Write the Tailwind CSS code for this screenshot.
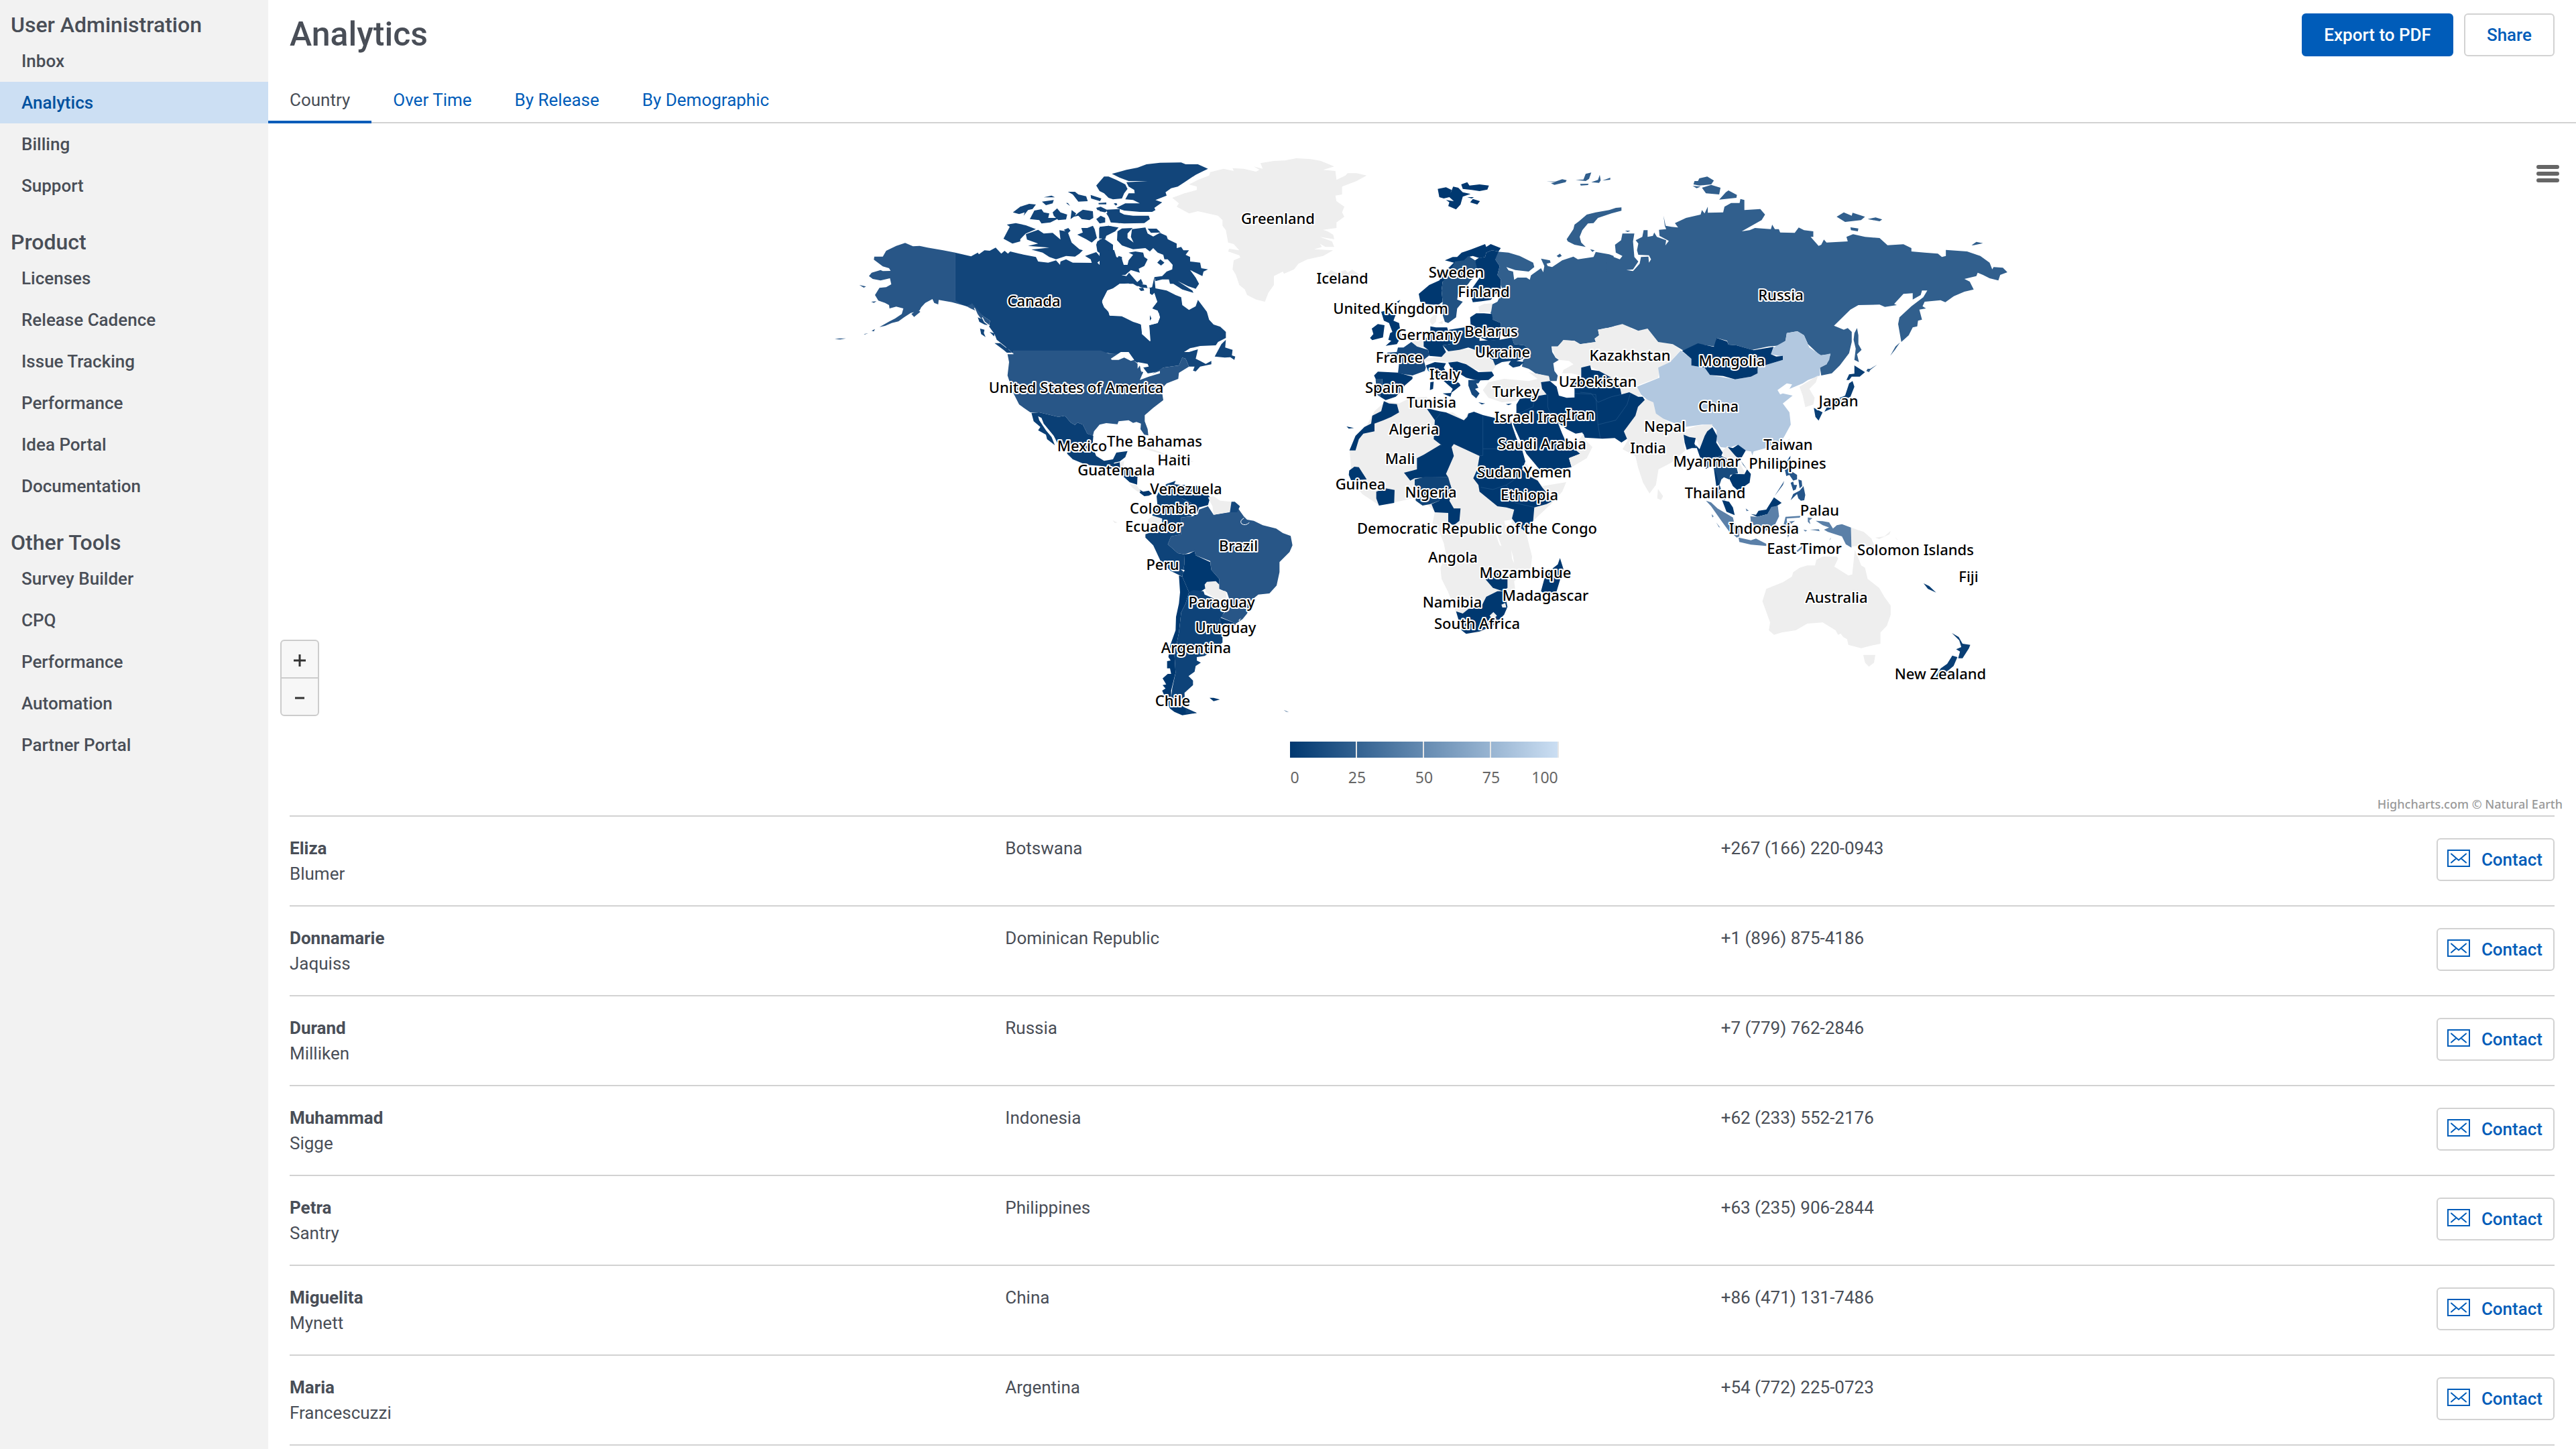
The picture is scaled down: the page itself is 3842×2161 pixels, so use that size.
<!DOCTYPE html>
<html lang="en">
<head>
  <meta charset="UTF-8" />
  <meta name="viewport" content="width=device-width, initial-scale=1.0" />
  <title>Analytics</title>
  <script src="https://cdn.jsdelivr.net/npm/@tailwindcss/browser@4"></script>
</head>
<body class="bg-white text-[#494e57] font-[Roboto,sans-serif] text-[26px] leading-[38px] min-h-screen">
  <div class="flex min-h-screen">
    <nav class="w-[400px] shrink-0 bg-[#f2f2f2] font-medium flex flex-col gap-4">
      <section>
        <h2 class="text-[32px] leading-[42px] px-4 pt-4 pb-[2px]">User Administration</h2>
        <a href="#" class="block px-8 py-3">Inbox</a>
        <a href="#" class="block px-8 py-3 bg-[#ccdff3] text-[#00519f]">Analytics</a>
        <a href="#" class="block px-8 py-3">Billing</a>
        <a href="#" class="block px-8 py-3">Support</a>
      </section>
      <section>
        <h2 class="text-[32px] leading-[42px] px-4 pt-4 pb-[2px]">Product</h2>
        <a href="#" class="block px-8 py-3">Licenses</a>
        <a href="#" class="block px-8 py-3">Release Cadence</a>
        <a href="#" class="block px-8 py-3">Issue Tracking</a>
        <a href="#" class="block px-8 py-3">Performance</a>
        <a href="#" class="block px-8 py-3">Idea Portal</a>
        <a href="#" class="block px-8 py-3">Documentation</a>
      </section>
      <section>
        <h2 class="text-[32px] leading-[42px] px-4 pt-4 pb-[2px]">Other Tools</h2>
        <a href="#" class="block px-8 py-3">Survey Builder</a>
        <a href="#" class="block px-8 py-3">CPQ</a>
        <a href="#" class="block px-8 py-3">Performance</a>
        <a href="#" class="block px-8 py-3">Automation</a>
        <a href="#" class="block px-8 py-3">Partner Portal</a>
      </section>
    </nav>

    <main class="flex-1 min-w-0">
      <header class="flex items-start justify-between pl-8 pr-8 pt-5 h-[114px]">
        <h1 class="text-[50px] leading-[62px] font-medium">Analytics</h1>
        <div class="flex gap-4 font-medium">
          <button class="h-16 px-[31px] rounded-md border-2 border-[#005cb9] bg-[#005cb9] text-white">Export to PDF</button>
          <button class="h-16 px-8 rounded-md border-2 border-[#d2d2d2] text-[#005cb9]">Share</button>
        </div>
      </header>

      <div role="tablist" class="flex h-[70px] shadow-[inset_0_-2px_0_#d2d2d2] text-[#005cb9]">
        <button role="tab" aria-selected="true" class="px-8 pt-1 border-b-4 border-[#005cb9] text-[#494e57]">Country</button>
        <button role="tab" class="px-8 pt-1 border-b-4 border-transparent">Over Time</button>
        <button role="tab" class="px-8 pt-1 border-b-4 border-transparent">By Release</button>
        <button role="tab" class="px-8 pt-1 border-b-4 border-transparent">By Demographic</button>
      </div>

      <section class="relative flex justify-center">
        <svg id="map" class="w-full max-w-[1800px]" viewBox="1221 184 1800 1032" role="img" aria-label="World map">
          <!-- Northern Canada, Alaska -->
          <g transform="translate(1220 210) scale(.33333)">
            <path class="fill-[#285687]" d="M390,457 425,472 455,470 490,478 560,490 614,500 614,714 640,718 690,728 710,740 740,785 770,805 765,825 735,800 715,780 700,760 665,740 600,722 540,712 538,732 520,725 512,708 480,725 462,745 455,758 435,765 415,770 385,790 360,808 330,815 300,828 275,833 320,808 345,795 375,775 382,750 350,742 320,750 318,735 300,725 270,715 255,690 275,658 305,655 328,642 322,615 280,625 245,618 228,605 240,590 280,578 290,583 325,582 318,570 290,562 250,532 252,518 290,518 305,492 350,470ZM418,775 445,755 458,765 430,788ZM185,645 215,652 205,657ZM238,720 262,718 250,725ZM75,887 95,884 125,884 100,889ZM205,865 225,861 210,866ZM240,850 255,842 250,853Z"/>
            <path class="fill-[#12457a]" d="M613,500 685,517 715,500 720,508 745,490 770,492 725,515 795,478 820,505 835,492 850,505 860,495 900,505 975,520 985,540 1030,545 1065,535 1083,555 1085,540 1110,530 1140,545 1225,546 1220,530 1195,515 1245,498 1260,515 1280,520 1250,545 1260,555 1285,520 1250,495 1245,465 1250,450 1275,435 1320,465 1320,500 1335,535 1345,515 1360,520 1360,620 1330,650 1300,660 1272,705 1270,735 1290,748 1303,782 1360,782 1360,960 1340,955 1300,948 1265,940 875,940 875,953 850,930 800,890 790,865 765,830 770,805 740,785 690,728 665,740 640,730 613,714Z"/>
            <path class="fill-[#12457a]" d="M845,375 885,368 930,378 975,395 930,415 905,440 905,450 870,460 830,438 858,385ZM930,418 985,398 1010,415 1050,412 1085,442 1080,400 1110,405 1120,415 1135,455 1170,485 1185,490 1170,505 1150,518 1110,515 1065,530 1035,520 1005,500 955,487 1035,478 940,470 985,460 935,442ZM872,320 905,295 945,282 975,285 960,305 940,310 920,335 925,320 900,328ZM948,350 968,312 1000,306 1010,320 1035,325 1030,345 1080,345 1040,365 1000,370 990,355ZM1050,320 1070,302 1085,320 1115,330 1110,352 1075,355 1055,335ZM1130,350 1135,310 1155,325 1150,335 1165,322 1185,308 1230,315 1232,345 1215,355 1180,350 1165,335 1145,340ZM1010,253 1045,245 1060,253ZM1002,272 1055,265 1050,280 1020,288ZM1118,228 1150,228 1165,240 1200,248 1207,270 1165,272 1140,240ZM1110,278 1118,278 1128,292ZM1220,242 1268,258 1262,270 1222,258ZM1160,420 1185,410 1178,390 1205,390 1230,380 1238,395 1248,435 1225,455 1200,440ZM1245,350 1265,335 1285,345 1285,365 1260,370ZM1258,390 1300,380 1345,388 1330,405 1290,425 1285,440 1258,435ZM1100,398 1120,390 1130,402 1118,414ZM1245,300 1265,295 1292,308 1290,318 1250,310ZM1255,278 1290,276 1290,284 1256,284ZM1290,308 1350,305 1350,368 1320,360 1300,340ZM1325,280 1340,282 1332,290Z"/>
            <path class="fill-[#12457a]" d="M725,840 745,845 742,860 750,878 730,865ZM790,905 815,905 860,940 868,948 845,948 830,935ZM835,910 855,935 850,938ZM715,790 740,800 760,825 745,822 722,810ZM768,855 790,862 788,875Z"/>
            <path class="fill-none stroke-white stroke-[4px]" d="M680,752 700,760 712,775 722,790M700,748 712,775 705,800M735,790 745,810 768,828"/>
          </g>
          <!-- Eastern Canada, Greenland, Iceland -->
          <g transform="translate(1640 210) scale(.33333)">
            <path class="fill-[#12457a]" d="M40,380 60,385 70,395 45,412 20,420 0,440 35,455 40,490 65,488 75,520 100,530 108,555 125,555 130,535 150,510 130,500 160,495 195,500 200,520 215,530 200,560 175,572 180,590 140,578 115,600 95,600 120,605 132,590 140,600 175,640 210,645 215,660 235,655 245,610 250,660 300,670 340,690 365,700 370,735 400,757 430,740 440,712 480,765 490,800 510,822 540,832 565,855 565,882 530,900 520,915 450,918 405,928 378,945 400,945 440,933 435,955 430,975 450,985 475,998 500,985 500,1000 450,1010 430,1032 418,1028 425,1010 400,1010 385,975 370,970 355,1005 285,1015 260,1032 215,1042 190,1060 185,1040 200,1020 180,1000 155,985 75,955 0,945 0,782 45,782 100,785 150,810 188,822 190,865 225,897 222,825 260,815 270,790 260,760 235,750 258,720 245,680 235,690 205,670 175,650 145,650 130,638 90,640 60,660 35,670 20,700 10,720 20,745 40,765 45,782 0,782 0,385Z"/>
            <path class="fill-white" d="M12,715 35,670 60,662 90,640 150,640 175,655 225,660 225,690 245,690 258,720 235,750 265,770 270,790 260,815 222,825 228,897 190,865 185,822 130,795 100,785 45,782 40,765 20,745Z"/>
            <path class="fill-[#12457a]" d="M-15,200 20,160 40,160 75,175 105,190 115,195 125,215 110,235 100,258 60,262 40,255 20,235 0,225ZM55,148 120,130 170,120 210,105 270,98 365,97 385,105 440,105 485,125 430,152 380,185 350,205 320,212 295,230 300,245 250,265 280,275 245,300 250,310 235,318 180,318 110,312 75,300 115,280 180,280 150,265 115,262 130,235 157,235 155,220 130,205 120,185 215,180 130,180 90,165ZM30,325 70,310 110,330 150,335 220,335 225,350 200,368 110,370 50,365 40,340ZM0,300 30,312 25,320 0,315ZM62,282 75,278 78,288ZM78,445 80,405 100,392 148,390 125,415 125,435 152,455 140,430 145,395 205,388 215,415 240,428 270,412 300,425 305,440 345,460 345,480 365,475 375,490 400,490 385,510 405,520 405,540 450,545 455,570 485,575 465,585 460,605 405,578 430,612 445,640 430,662 395,650 350,628 415,670 420,680 370,665 330,640 315,640 310,620 280,620 250,628 245,610 280,605 300,585 325,575 327,555 305,530 290,530 285,510 260,500 240,480 225,495 205,480 150,485 100,468ZM215,393 255,393 273,410 230,412ZM165,635 185,618 195,640 175,645ZM258,545 272,530 290,545 275,558ZM175,660 195,657 200,670 185,672ZM225,780 232,795 225,805ZM515,965 545,910 565,890 562,925 595,935 592,960 607,965 603,980 585,968 560,970Z"/>
            <path class="fill-[#eee]" d="M325,255 380,235 435,220 435,205 400,195 440,175 490,155 495,140 555,125 600,135 595,122 645,125 700,138 715,130 690,115 730,125 720,100 780,90 830,88 880,78 945,82 990,90 1050,115 1000,130 1055,135 1060,175 1100,155 1110,145 1150,145 1195,155 1150,180 1085,205 1085,240 1055,245 1060,270 1095,295 1085,320 1095,340 1060,365 1060,390 1000,398 1020,405 1045,420 1050,440 985,430 1040,450 1050,475 1010,475 985,460 995,475 960,485 1045,490 1000,515 930,530 890,550 870,575 825,595 820,585 780,605 780,645 755,680 740,720 700,710 660,690 650,665 625,645 610,600 595,575 600,535 630,522 625,512 575,495 580,483 625,490 600,462 575,455 565,400 550,380 550,355 530,335 440,315 400,325 345,295 355,280ZM1010,600 1035,578 1060,590 1100,578 1110,590 1130,576 1165,600 1120,625 1050,620Z"/>
          </g>
          <!-- United States and Latin America -->
          <g transform="translate(1500 600) scale(.33333)">
            <path class="fill-[#285687]" d="M33,-232 425,-232 460,-218 500,-218 520,-225 575,-185 605,-160 610,-120 650,-125 705,-155 775,-165 790,-200 805,-195 820,-160 775,-132 772,-105 720,-85 697,-60 705,-10 660,25 622,58 622,85 635,120 638,148 620,145 603,120 605,95 585,88 570,92 550,80 505,85 500,98 450,93 420,100 395,130 390,150 365,140 345,100 320,90 310,102 290,90 265,60 235,65 150,45 110,45 60,10 35,-40 8,-120 15,-180 8,-215 35,-215Z"/>
            <path class="fill-white" d="M470,-195 515,-225 550,-225 575,-190 560,-185 530,-200 505,-190 475,-190ZM590,-180 635,-172 640,-160 615,-155 635,-130 660,-130 690,-140 690,-130 640,-115 600,-100 615,-135 605,-140 600,-165 590,-150Z"/>
            <path class="fill-[#0a3f75]" d="M115,47 150,45 235,65 265,60 290,90 310,102 320,90 345,100 365,140 392,150 388,200 405,240 440,262 480,255 495,225 545,218 535,245 510,265 485,270 480,295 430,285 360,280 300,255 275,230 275,205 235,190 215,150 170,95 160,70 145,62 150,80 180,125 205,155 220,192 185,165 180,145 145,125 155,110 125,85Z"/>
            <path class="fill-[#003870]" d="M482,275 512,268 512,290 560,300 590,320 588,368 555,358 530,335 480,300ZM598,390 615,400 640,395 655,410 640,418 620,420 600,405ZM735,240 745,242 740,248Z"/>
            <path class="fill-[#eee]" d="M510,268 530,262 525,295 512,290ZM555,366 585,370 605,400 590,400 565,380ZM580,205 620,198 700,225 712,235 660,220 610,205ZM700,245 790,252 755,262 710,255ZM478,528 500,538 488,540ZM660,140 680,150 676,160ZM820,262 842,263 832,267Z"/>
            <path class="fill-[#285687]" d="M785,515 835,510 860,500 865,480 905,465 930,503 1000,492 1040,475 1065,510 1080,525 1110,530 1150,550 1210,565 1240,585 1275,598 1283,640 1270,670 1225,715 1225,760 1212,820 1180,855 1130,860 1100,885 1080,945 1060,970 1030,990 960,960 1000,920 1000,880 990,850 955,835 955,790 920,750 915,710 850,685 845,665 800,680 770,675 725,635 740,600 785,590Z"/>
            <path class="fill-[#0e4379]" d="M675,420 690,390 720,365 760,352 740,400 790,430 830,450 840,480 830,510 785,515 785,590 740,600 725,635 770,675 798,680 800,720 790,780 740,755 695,715 660,640 625,605 625,590 670,575 700,540 655,505 680,470Z"/>
            <path class="fill-[#003870]" d="M720,375 760,350 745,365 770,368 800,370 870,375 885,390 915,425 905,460 865,470 850,510 835,500 830,450 790,430 740,410Z"/>
            <path class="fill-[#eee]" d="M905,425 930,420 960,440 1010,445 1005,490 930,503 925,465ZM635,525 660,508 700,520 700,545 650,585 630,580 640,550Z"/>
            <path class="fill-[#15487d]" d="M1010,445 1025,445 1048,465 1035,492 1003,492Z"/>
            <path class="fill-none stroke-white stroke-[3px]" d="M1066,518Q1045,530 1055,543Q1072,555 1090,538"/>
            <path class="fill-[#003870]" d="M798,680 820,678 845,665 850,685 915,715 920,750 955,790 955,835 890,835 860,855 820,850 790,780 800,720Z"/>
            <path class="fill-[#003870]" d="M775,775 790,780 820,850 805,900 785,940 775,1030 755,1130 760,1210 740,1290 740,1320 800,1365 855,1390 790,1400 755,1385 735,1370 700,1290 715,1280 702,1265 718,1262 702,1235 725,1215 740,1215 735,1190 722,1190 722,1158 738,1155 728,1140 735,1090 760,1020 762,960 775,900 780,850Z"/>
            <path class="fill-[#0e4379]" d="M820,850 840,840 885,845 890,860 985,900 985,930 960,965 955,1010 970,1045 970,1075 935,1105 890,1135 855,1140 855,1155 873,1165 850,1180 845,1205 818,1225 838,1245 838,1265 800,1300 802,1365 740,1320 745,1280 760,1210 755,1130 775,1030 785,940 805,900ZM805,1368 855,1390 805,1392Z"/>
            <path class="fill-[#eee]" d="M890,815 900,803 940,800 955,815 955,840 985,845 990,885 950,885 895,850Z"/>
            <path class="fill-[#003870]" d="M960,963 1030,990 1020,1010 955,1005ZM912,1322 930,1322 958,1330 930,1337ZM1243,1376 1267,1387 1255,1384Z"/>
            <path class="fill-white" d="M782,748 800,750 798,758ZM1052,965 1045,980 1042,975Z"/>
          </g>
          <!-- Europe and the Middle East -->
          <g transform="translate(1960 220) scale(.33333)">
            <path class="fill-[#315f8d]" d="M810,465 870,470 920,485 980,515 985,535 960,555 900,548 860,535 870,550 890,555 895,592 910,582 950,582 965,592 970,572 1015,540 1025,558 1030,530 1015,497 1055,505 1058,515 1040,520 1045,530 1065,535 1110,505 1160,488 1180,500 1250,490 1260,467 1320,478 1340,485 1340,800 1270,815 1275,840 1255,855 1260,870 1190,880 1165,865 1115,862 1090,890 1062,890 1065,915 1080,940 1095,950 1070,965 1075,1000 1090,1020 1085,1045 1055,1045 1050,1025 990,1010 960,990 930,980 935,950 960,930 960,900 940,885 895,880 885,850 835,820 835,785 800,770 790,740 790,705 820,690 845,640 835,615 835,590 820,570 830,530 810,500ZM1130,410 1160,365 1165,345 1185,330 1220,300 1260,290 1320,280 1350,270 1375,268 1375,283 1330,295 1270,315 1250,338 1225,340 1200,370 1188,400 1195,425 1215,445 1165,435 1135,420ZM1085,485 1100,475 1108,485 1095,492ZM1235,455 1255,460 1245,467ZM1040,152 1080,152 1110,142 1130,146 1125,155 1075,167 1060,160 1080,155ZM1170,145 1205,143 1215,118 1240,112 1230,140 1215,150ZM1240,155 1270,145 1278,122 1282,147 1275,158ZM1290,148 1325,135 1325,144ZM1190,163 1228,162 1225,168 1193,170Z"/>
            <path class="fill-[#003870]" d="M553,185 590,178 615,190 610,205 622,175 645,180 665,200 700,208 665,220 655,255 635,277 600,262 605,245 590,235 625,240 605,222 580,228 560,222ZM658,165 685,155 695,170 740,165 782,170 775,188 740,195 705,190 665,185ZM685,222 715,222 705,228ZM698,245 710,230 742,240 730,255ZM468,655 515,615 560,595 600,540 625,515 585,505 620,490 640,490 660,470 700,457 765,432 770,445 790,432 835,450 825,465 795,460 770,470 765,490 740,495 710,485 690,490 690,510 640,510 620,540 590,590 575,600 570,640 575,690 555,705 500,700 475,690Z"/>
            <path class="fill-[#205182]" d="M690,485 720,505 735,540 720,580 700,595 690,610 645,650 640,680 665,690 640,720 635,760 600,785 585,780 572,740 575,690 570,640 575,600 600,570 630,510 670,505ZM275,1035 305,1035 305,1060 300,1080 295,1115 280,1105Z"/>
            <path class="fill-[#003870]" d="M735,495 765,490 770,470 795,460 825,465 810,500 830,530 820,570 835,590 835,630 790,682 750,688 710,692 700,660 700,640 735,590 750,570 730,545 720,505ZM698,760 725,742 760,742 795,745 800,770 835,785 835,820 830,860 780,865 740,850 720,800 700,792Z"/>
            <path class="fill-[#eee]" d="M735,712 760,700 798,697 792,735 740,738ZM520,765 535,750 550,745 545,780 528,795 518,780ZM555,785 575,775 575,790ZM425,880 460,855 490,865 490,895 460,890ZM490,945 570,935 590,915 660,900 720,905 800,950 815,975 795,1003 740,1000 700,985 660,960 600,960 540,955 500,958ZM755,1085 780,1050 850,1035 960,1045 1000,1035 960,1005 1050,1022 1055,1045 1020,1050 1040,1110 930,1120 900,1135 840,1140 780,1120 765,1100Z"/>
            <path class="fill-[#0d4278]" d="M605,815 680,803 720,803 740,850 740,865 830,860 885,850 895,880 940,885 960,900 960,930 920,950 905,955 940,960 920,978 890,985 870,970 880,955 840,960 810,975 800,950 720,905 690,895 650,905 600,912 575,885 610,880 595,840Z"/>
            <path class="fill-[#003870]" d="M520,800 545,805 595,805 605,840 610,880 575,885 590,915 570,937 515,932 510,905 490,890 490,860 520,840ZM268,1020 285,1003 375,1007 440,1025 440,1035 405,1065 390,1090 365,1115 320,1130 295,1115 300,1080 305,1060 305,1035 275,1035ZM500,975 540,960 590,965 580,985 600,1020 650,1055 655,1065 630,1085 610,1100 620,1080 580,1045 545,1005 510,1000ZM520,1050 535,1048 532,1080 518,1085ZM575,1100 615,1098 610,1115ZM600,962 640,958 680,970 735,1005 795,1003 805,1020 780,1040 745,1042 720,1040 680,1030 640,1005 620,1000ZM300,735 320,730 335,742 365,748 355,775 380,785 390,845 370,880 320,887 345,865 332,860 340,830 350,825 335,785 312,775ZM370,690 385,682 378,695ZM250,852 265,835 258,810 285,790 315,795 308,850 260,862ZM858,1148 885,1145 870,1153Z"/>
            <path class="fill-[#15487d]" d="M325,918 370,915 375,895 400,895 435,870 460,890 510,905 515,930 490,950 500,985 495,1000 440,1020 375,1010 380,965 350,935ZM690,1040 745,1040 735,1055 725,1055 735,1075 720,1080 740,1100 725,1122 705,1105 690,1065ZM735,1140 765,1145 750,1150Z"/>
            <path class="fill-[#eee]" d="M1062,890 1090,890 1115,862 1165,865 1190,880 1260,870 1255,855 1275,840 1270,815 1330,805 1379,789 1415,797 1420,812 1450,820 1492,808 1539,870 1605,880 1640,905 1593,960 1545,985 1540,1030 1445,1065 1462,1110 1400,1115 1367,1105 1370,1080 1330,1030 1275,1000 1235,980 1195,985 1195,1020 1150,1010 1110,1010 1115,995 1160,970 1140,955 1095,950 1080,940Z"/>
            <path class="fill-[#003870]" d="M1195,985 1235,975 1240,995 1275,1000 1330,1030 1370,1080 1375,1105 1410,1095 1450,1115 1470,1115 1490,1145 1455,1155 1470,1170 1455,1205 1430,1235 1390,1265 1405,1300 1375,1320 1345,1300 1290,1303 1210,1298 1200,1275 1170,1280 1130,1260 1090,1230 1110,1280 1130,1325 1190,1315 1190,1370 1140,1390 1152,1430 1020,1450 1000,1430 950,1370 900,1260 890,1235 905,1190 905,1150 920,1125 1010,1110 1040,1105 1020,1080 1015,1050 1055,1045 1085,1070 1095,1110 1130,1120 1165,1118 1165,1080 1145,1040 1195,1030Z"/>
            <path class="fill-[#eee]" d="M1130,1320 1180,1315 1205,1280 1215,1310 1245,1340 1220,1390 1152,1430 1140,1390 1190,1370Z"/>
            <path class="fill-none stroke-[#4a78a8] stroke-1" d="M1045,1105 1045,1160 1060,1200 1090,1235M1165,1100 1260,1105 1270,1240 1280,1300M1270,1140 1330,1115 1375,1105M1270,1240 1350,1220 1400,1150 1415,1100M905,1195 980,1160 985,1110M1190,1095 1240,1100 1270,1140"/>
          </g>
          <!-- Africa -->
          <g transform="translate(1960 600) scale(.33333)">
            <path class="fill-[#eee]" d="M320,-5 380,5 430,-20 505,-25 520,30 540,50 620,45 670,80 690,45 750,60 830,75 870,80 885,120 900,150 945,270 1000,345 1020,375 1128,357 1110,400 1060,455 980,530 950,590 975,690 970,740 895,800 900,840 865,870 860,930 800,1000 740,1030 680,1035 660,1020 635,940 600,850 570,790 565,740 590,680 580,630 560,580 530,540 540,490 510,460 480,460 440,430 350,450 290,460 215,410 170,350 155,320 165,290 158,210 190,180 260,60 270,40Z"/>
            <path class="fill-[#003870]" d="M312,-5 335,5 370,8 380,45 345,65 310,80 270,95 270,130 220,140 200,165 185,215 158,215 185,150 225,110 255,95 260,60 300,40ZM505,30 520,30 560,40 590,45 670,80 685,65 690,50 715,42 755,57 830,75 880,80 888,110 905,160 930,210 945,265 930,300 960,330 1000,350 1020,380 1070,440 1040,455 985,470 980,530 940,575 905,545 885,520 895,480 860,470 820,465 740,400 735,370 712,340 730,300 740,240 625,187 615,200 565,188 535,165 540,80ZM600,190 615,200 625,240 590,320 600,335 500,335 450,340 430,350 402,315 460,300 460,250 490,235 565,190ZM590,350 610,370 620,400 605,440 625,475 655,475 650,530 625,550 600,540 600,495 540,492 525,455 560,440ZM157,305 180,288 200,290 235,345 165,348 155,325ZM278,400 320,385 360,392 358,450 290,462 278,430ZM765,790 810,760 865,790 865,830 845,845 800,830ZM635,935 665,945 690,925 750,910 770,870 820,845 850,845 865,915 850,950 800,1000 740,1025 680,1036 660,1020ZM1100,697 1115,745 1085,845 1050,870 1015,845 1030,790 1065,745 1090,725ZM145,108 178,115 155,118Z"/>
            <path class="fill-[#104478]" d="M450,345 500,332 600,335 610,370 560,440 520,455 485,462 455,440 450,400Z"/>
            <path class="fill-[#eee]" d="M785,955 802,938 818,955 800,972ZM838,905 855,898 860,918 842,918Z"/>
            <path class="fill-white" d="M850,530 885,525 880,555 855,550ZM808,580 820,590 838,643 830,640ZM882,660 890,690 895,720 885,700Z"/>
            <path class="fill-none stroke-[#4a78a8] stroke-1" d="M755,60 755,208 930,208M740,238 755,238 755,208M540,80 565,50M745,380 800,390 860,370 890,350 930,300M860,370 900,450 985,470"/>
          </g>
          <!-- Russia, China, Japan -->
          <g transform="translate(2400 220) scale(.39541 .33333)">
            <path class="fill-[#315f8d]" d="M-10,478 40,500 50,485 25,470 22,435 45,415 50,385 95,385 90,420 95,490 110,510 90,545 65,548 90,553 115,520 120,490 148,488 150,515 158,500 150,482 110,480 105,460 110,430 100,415 125,400 130,370 145,370 145,400 165,395 170,380 180,400 215,415 212,438 225,418 190,395 188,368 215,365 210,350 205,305 213,350 235,355 260,358 248,338 290,315 345,300 350,280 360,295 372,265 372,292 430,290 435,265 460,248 492,248 495,230 510,235 510,280 570,275 588,300 575,325 500,375 530,370 550,360 610,365 615,345 625,365 640,365 645,380 700,382 715,358 735,370 770,375 770,400 760,400 790,440 800,435 810,412 820,425 900,420 895,400 920,388 965,400 1020,405 1050,437 1110,433 1140,450 1140,465 1190,470 1240,475 1255,490 1270,485 1270,458 1350,465 1400,485 1435,515 1445,545 1450,535 1485,538 1502,558 1475,570 1468,595 1435,585 1410,570 1390,560 1385,575 1340,588 1360,600 1375,635 1340,645 1300,665 1268,692 1250,683 1190,690 1182,710 1195,720 1170,725 1180,770 1165,775 1162,800 1145,805 1130,840 1102,870 1090,790 1095,760 1140,710 1185,670 1200,640 1180,640 1175,660 1145,680 1145,652 1110,655 1075,700 1085,705 1040,713 1020,703 940,705 910,725 848,797 885,815 900,808 915,825 915,870 905,920 870,975 840,1010 800,1020 795,985 820,970 835,925 795,930 750,880 735,840 710,822 670,830 665,865 650,885 600,890 540,905 480,885 450,882 445,865 405,852 400,890 335,880 280,908 240,880 185,870 145,810 110,820 50,790 -10,808Z"/>
            <path class="fill-[#315f8d]" d="M318,165 322,150 335,150 340,138 370,130 395,148 385,165 340,170ZM350,180 385,167 420,180 415,210 365,205ZM315,172 345,175 330,182ZM415,233 440,200 450,192 482,212 480,225ZM858,310 885,290 915,305 918,292 965,310 950,325 890,333ZM975,320 1005,313 1030,322 1020,330ZM910,357 940,362 938,375 912,370ZM1367,437 1385,422 1410,428 1375,437ZM60,372 80,372 70,378ZM925,830 935,808 940,840 940,880 952,905 935,925 942,960 925,950 930,900 922,860ZM1060,932 1080,890 1097,872 1078,905ZM970,1000 975,990 985,990 1010,972 985,995 980,1005Z"/>
            <path class="fill-[#b2c8e0]" d="M270,908 310,945 310,975 360,985 380,1018 475,1037 535,1025 560,1010 560,985 600,970 655,950 655,935 610,925 620,895 665,865 670,830 710,822 735,840 755,895 800,930 835,922 830,950 820,970 795,985 795,1020 750,1040 730,1055 680,1080 690,1060 670,1055 635,1085 645,1105 655,1100 692,1110 655,1145 680,1185 685,1240 662,1290 640,1330 575,1350 545,1360 540,1378 535,1360 510,1355 485,1330 450,1345 420,1340 405,1310 405,1265 385,1240 350,1240 285,1250 250,1235 175,1200 165,1150 120,1105 105,1070 190,1030 185,985 230,960Z"/>
            <path class="fill-[#003870]" d="M275,910 335,876 395,892 405,852 445,868 450,882 480,885 545,907 620,892 610,925 630,935 655,932 655,950 600,970 560,985 560,1010 535,1025 475,1037 430,1022 380,1018 360,985 310,975 310,945Z"/>
            <path class="fill-[#eee]" d="M718,1070 788,1020 780,1050 755,1080 775,1120 770,1150 740,1162 730,1110ZM670,1310 682,1302 678,1330Z"/>
            <path class="fill-[#0a3f75]" d="M895,1040 905,1015 925,1012 925,975 945,990 965,1005 945,1025 915,1025 905,1040ZM905,1055 918,1045 925,1070 910,1115 880,1135 835,1170 812,1182 820,1165 850,1140 870,1120 890,1110ZM772,1165 805,1185 790,1222 778,1205Z"/>
          </g>
          <!-- South Asia and Oceania -->
          <g transform="translate(2420 600) scale(.3827 .33333)">
            <path class="fill-[#eee]" d="M60,20 90,-15 120,0 130,50 180,90 250,120 290,105 350,98 345,125 320,150 300,205 290,170 240,150 240,200 245,215 190,270 140,300 130,370 105,408 80,360 60,290 50,240 0,210 20,170 5,130 50,60ZM138,388 158,420 150,437 135,430ZM385,220 410,195 440,240 470,300 480,325 455,320 440,260 400,250ZM890,560 940,580 970,610 985,650 940,640 892,645ZM985,605 1020,600 1045,575 1040,590 1000,612ZM1060,600 1075,618 1068,612ZM545,890 560,835 625,805 660,780 665,760 690,740 720,730 750,730 755,705 780,690 835,690 840,700 825,735 880,775 895,770 905,660 920,700 930,730 945,740 955,790 1000,830 1020,870 1045,910 1045,950 1030,1000 1005,1030 1005,1080 965,1090 930,1100 880,1085 875,1060 860,1050 850,1035 840,1040 830,1020 780,985 720,990 675,1020 620,1030 590,1040 570,1020 575,985ZM938,1130 985,1130 980,1165 960,1183 945,1165Z"/>
            <path class="fill-[#003870]" d="M238,145 260,155 285,160 280,185 290,205 270,205 250,212 242,180ZM350,112 368,150 365,180 390,225 385,240 360,245 350,280 325,298 300,240 285,190 300,210 320,150 330,130ZM355,290 365,300 378,370 365,375ZM410,200 430,205 450,190 480,215 465,245 455,250 470,280 500,320 495,360 450,395 430,375 415,340 430,320 475,322 485,300 460,260 440,240ZM388,438 415,445 430,470 437,505 405,490ZM500,500 520,503 530,485 560,480 590,425 620,450 600,465 580,470 565,500 525,512Z"/>
            <path class="fill-[#184b7e]" d="M355,295 360,245 385,240 440,270 450,318 420,325 415,345 395,335 385,345 378,370 400,440 365,400 378,370 365,320Z"/>
            <path class="fill-[#5b80a8]" d="M325,440 345,448 370,475 430,515 435,540 455,560 455,600 420,585 385,530 345,465ZM347,500 355,510 350,515ZM365,538 380,560 375,558ZM498,510 525,512 565,500 580,468 605,463 610,510 595,545 560,575 520,560 500,535ZM480,475 492,485 483,487ZM452,605 480,612 500,617 520,610 560,633 560,643 500,637 455,625ZM430,590 455,600 445,605ZM635,512 695,508 690,516 640,520 640,535 672,530 650,550 672,580 655,575 645,605 635,560 625,560ZM675,668 700,642 698,655 682,670ZM722,515 740,518 728,528 732,545 722,535ZM730,570 765,568 768,577 750,573ZM705,570 720,573 712,578ZM753,530 780,532 805,537 820,565 835,550 855,545 890,560 892,650 870,635 855,600 800,580 785,570 805,560 780,550ZM805,618 812,605 810,612Z"/>
            <path class="fill-[#25558a]" d="M632,300 640,265 650,245 655,240 650,270 662,300 660,310 680,325 680,345 665,350 650,325 638,330ZM655,360 665,355 668,370 680,370 675,390 665,395ZM685,345 698,350 700,375 690,385ZM655,438 665,410 690,395 705,375 712,415 708,438 695,440 685,430 680,410ZM592,420 630,352 625,370Z"/>
            <path class="fill-[#0a3f75]" d="M1283,1032 1310,1050 1325,1080 1355,1085 1350,1100 1325,1145 1308,1145 1315,1115 1300,1105 1320,1095 1312,1065ZM1285,1133 1305,1140 1290,1180 1240,1228 1220,1228 1240,1190 1265,1170ZM1173,810 1195,822 1222,851 1190,835Z"/>
          </g>
          <!-- Colour scale -->
          <defs>
            <linearGradient id="scale">
              <stop offset="0" stop-color="#003870" />
              <stop offset="1" stop-color="#ccdff3" />
            </linearGradient>
          </defs>
          <rect x="1924" y="1106" width="401" height="24" fill="url(#scale)" />
          <path class="stroke-[#e6e6e6] stroke-2" d="M2023,1106v24M2123,1106v24M2223,1106v24M2324,1106v24" />
          <g class="fill-[#666] text-[23px] font-['Noto_Sans',sans-serif]" text-anchor="middle">
            <text x="1931" y="1168">0</text>
            <text x="2024" y="1168">25</text>
            <text x="2124" y="1168">50</text>
            <text x="2224" y="1168">75</text>
            <text x="2304" y="1168">100</text>
          </g>
          <g id="labels" class="fill-black stroke-white stroke-4 text-[22px] font-medium font-['Noto_Sans',sans-serif]" text-anchor="middle" paint-order="stroke" stroke-linejoin="round"></g>
        </svg>

        <button aria-label="Chart menu" class="absolute right-[25px] top-[62px]">
          <svg class="w-[34px] h-[26px] stroke-[#666] stroke-[6px]" viewBox="0 0 34 26" stroke-linecap="round">
            <path d="M3 3h28M3 13h28M3 23h28" />
          </svg>
        </button>
        <div class="absolute left-[18px] bottom-[148px] flex flex-col">
          <button aria-label="Zoom in" class="size-[58px] pt-1 rounded-t-md border-2 border-[#ccc] bg-[#f7f7f7] flex items-center justify-center">
            <svg class="size-5 stroke-[#333] stroke-[3px]" viewBox="0 0 20 20"><path d="M1 10h18M10 1v18" /></svg>
          </button>
          <button aria-label="Zoom out" class="size-[58px] pt-1 -mt-[2px] rounded-b-md border-2 border-[#ccc] bg-[#f7f7f7] flex items-center justify-center">
            <svg class="size-5 stroke-[#333] stroke-[3px]" viewBox="0 0 20 20"><path d="M3 10h14" /></svg>
          </button>
        </div>
        <a href="#" class="absolute right-5 bottom-[5px] text-[18px] leading-6 text-[#999] font-medium font-['Noto_Sans',sans-serif]">Highcharts.com © Natural Earth</a>
      </section>

      <div class="px-8">
        <table class="w-full table-fixed text-left">
          <colgroup><col /><col /><col /><col class="w-[176px]" /></colgroup>
          <tbody id="contacts"></tbody>
        </table>
      </div>
    </main>
  </div>

  <script>
    const contacts = [
      ["Eliza", "Blumer", "Botswana", "+267 (166) 220-0943"],
      ["Donnamarie", "Jaquiss", "Dominican Republic", "+1 (896) 875-4186"],
      ["Durand", "Milliken", "Russia", "+7 (779) 762-2846"],
      ["Muhammad", "Sigge", "Indonesia", "+62 (233) 552-2176"],
      ["Petra", "Santry", "Philippines", "+63 (235) 906-2844"],
      ["Miguelita", "Mynett", "China", "+86 (471) 131-7486"],
      ["Maria", "Francescuzzi", "Argentina", "+54 (772) 225-0723"],
    ];

    document.getElementById("contacts").innerHTML = contacts.map(([first, last, country, phone]) => `
      <tr class="h-[134px] border-y-2 border-[#d2d2d2] align-top">
        <td class="pt-7"><div class="font-bold">${first}</div><div>${last}</div></td>
        <td class="pt-7">${country}</td>
        <td class="pt-7">${phone}</td>
        <td class="pt-8">
          <button class="w-full h-16 rounded-md border-2 border-[#d2d2d2] text-[#005cb9] font-medium flex items-center justify-between pl-[14px] pr-4">
            <svg class="w-[34px] h-[26px] mb-1 fill-none stroke-[#005cb9] stroke-2" viewBox="0 0 34 26" stroke-linecap="round">
              <path d="M1 1h32v24H1zM6 6.500l11 9.500 11-9.500M6 19.500l7-6M28 19.500l-7-6" />
            </svg>
            Contact
          </button>
        </td>
      </tr>`).join("");

    // [name, centre x, baseline y]
    const labels = [
      ["Canada", 1542, 457], ["United States of America", 1605, 586], ["Greenland", 1906, 334],
      ["Iceland", 2002, 423], ["United Kingdom", 2074, 468], ["Sweden", 2172, 414],
      ["Finland", 2213, 443], ["Belarus", 2224, 502], ["Germany", 2131, 507],
      ["Ukraine", 2241, 533], ["France", 2087, 541], ["Italy", 2155, 566],
      ["Spain", 2065, 586], ["Tunisia", 2135, 608], ["Turkey", 2261, 592],
      ["Uzbekistan", 2383, 577], ["Israel", 2258, 630], ["Iraq", 2315, 630],
      ["Iran", 2357, 626], ["Saudi Arabia", 2300, 670], ["Algeria", 2109, 648],
      ["Mali", 2088, 692], ["Guinea", 2029, 730], ["Nigeria", 2134, 742],
      ["Sudan", 2236, 712], ["Yemen", 2308, 712], ["Ethiopia", 2281, 746],
      ["Democratic Republic of the Congo", 2203, 796], ["Angola", 2167, 839],
      ["Mozambique", 2275, 862], ["Madagascar", 2305, 896], ["Namibia", 2166, 906],
      ["South Africa", 2203, 938], ["Kazakhstan", 2431, 538], ["Russia", 2656, 448],
      ["Mongolia", 2583, 546], ["China", 2563, 614], ["Nepal", 2483, 644],
      ["India", 2458, 676], ["Japan", 2742, 606], ["Taiwan", 2667, 671],
      ["Myanmar", 2546, 696], ["Philippines", 2666, 699], ["Thailand", 2558, 743],
      ["Palau", 2714, 769], ["Indonesia", 2631, 796], ["East Timor", 2691, 826],
      ["Solomon Islands", 2857, 828], ["Fiji", 2936, 868], ["Australia", 2739, 899],
      ["New Zealand", 2894, 1013], ["Mexico", 1614, 673], ["The Bahamas", 1722, 666],
      ["Haiti", 1751, 694], ["Guatemala", 1665, 709], ["Venezuela", 1769, 737],
      ["Colombia", 1735, 766], ["Ecuador", 1721, 793], ["Brazil", 1847, 822],
      ["Peru", 1734, 850], ["Paraguay", 1822, 906], ["Uruguay", 1828, 944],
      ["Argentina", 1784, 974], ["Chile", 1749, 1053],
    ];

    document.getElementById("labels").innerHTML = labels
      .map(([name, x, y]) => `<text x="${x}" y="${y}">${name}</text>`).join("");
  </script>
</body>
</html>
